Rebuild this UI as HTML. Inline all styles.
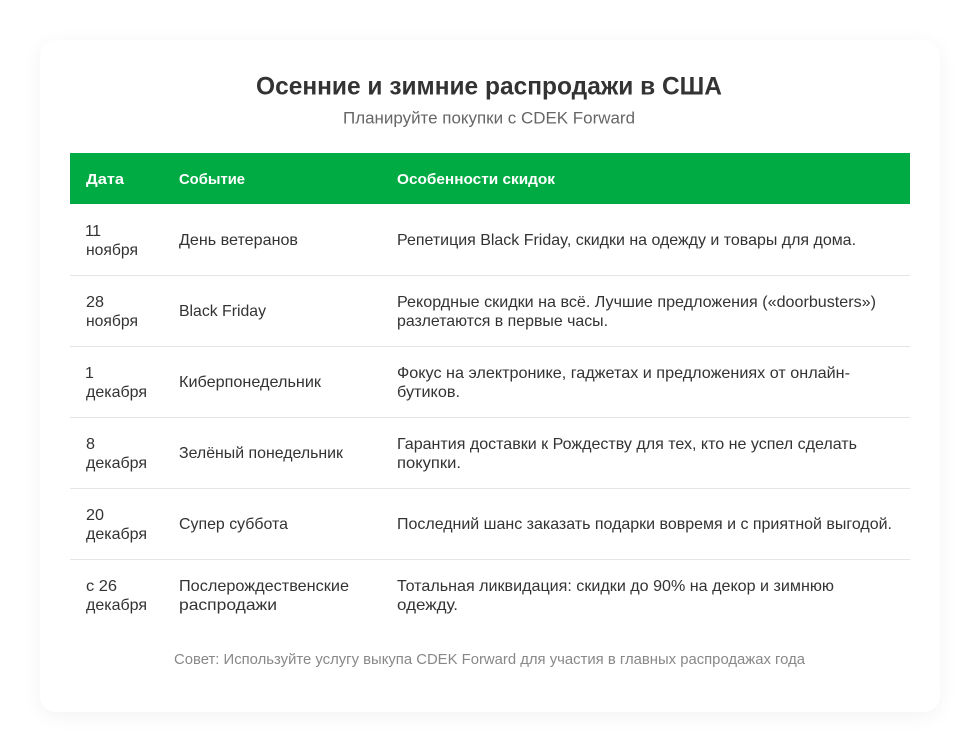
<!DOCTYPE html>
<html lang="ru">
<head>
<meta charset="utf-8">
<title>Осенние и зимние распродажи в США</title>
<style>
html,body{margin:0;padding:0;background:#fff;width:978px;height:752px;overflow:hidden}
.card{position:absolute;left:40px;top:40px;width:900px;height:672px;background:#fff;border-radius:16px;box-shadow:0 4px 20px rgba(0,0,0,.05)}
svg{position:absolute;left:0;top:0}
text{font-family:"Liberation Sans",sans-serif;font-size:16px;fill:#333}
.h{font-size:15px;font-weight:700;fill:#fff}
</style>
</head>
<body>
<div class="card"></div>
<svg width="978" height="752" viewBox="0 0 978 752" xmlns="http://www.w3.org/2000/svg">
<text x="256" y="94.500" style="font-size:25px;font-weight:700" textLength="466" lengthAdjust="spacingAndGlyphs">Осенние и зимние распродажи в США</text>
<text x="343" y="123.500" style="font-size:17px;fill:#666" textLength="292" lengthAdjust="spacingAndGlyphs">Планируйте покупки с CDEK Forward</text>
<rect x="70" y="153" width="840" height="51" fill="#00AB44"/>
<text class="h" x="86" y="184" textLength="38" lengthAdjust="spacingAndGlyphs">Дата</text>
<text class="h" x="179" y="184" textLength="66" lengthAdjust="spacingAndGlyphs">Событие</text>
<text class="h" x="397" y="184" textLength="158" lengthAdjust="spacingAndGlyphs">Особенности скидок</text>
<g fill="#e5e5e5">
<rect x="70" y="275" width="840" height="1"/>
<rect x="70" y="346" width="840" height="1"/>
<rect x="70" y="417" width="840" height="1"/>
<rect x="70" y="488" width="840" height="1"/>
<rect x="70" y="559" width="840" height="1"/>
</g>
<text x="85" y="236" textLength="15" lengthAdjust="spacing" style="letter-spacing:-1px">11</text>
<text x="86" y="255" textLength="52" lengthAdjust="spacingAndGlyphs">ноября</text>
<text x="179" y="245" textLength="119" lengthAdjust="spacingAndGlyphs">День ветеранов</text>
<text x="397" y="245" textLength="459" lengthAdjust="spacingAndGlyphs">Репетиция Black Friday, скидки на одежду и товары для дома.</text>
<text x="86" y="307" textLength="18" lengthAdjust="spacingAndGlyphs">28</text>
<text x="86" y="326" textLength="52" lengthAdjust="spacingAndGlyphs">ноября</text>
<text x="179" y="316" textLength="87" lengthAdjust="spacingAndGlyphs">Black Friday</text>
<text x="397" y="307" textLength="479" lengthAdjust="spacingAndGlyphs">Рекордные скидки на всё. Лучшие предложения («doorbusters»)</text>
<text x="397" y="326" textLength="211" lengthAdjust="spacingAndGlyphs">разлетаются в первые часы.</text>
<text x="85" y="378">1</text>
<text x="86" y="397" textLength="61" lengthAdjust="spacingAndGlyphs">декабря</text>
<text x="179" y="387" textLength="142" lengthAdjust="spacingAndGlyphs">Киберпонедельник</text>
<text x="397" y="378" textLength="453" lengthAdjust="spacingAndGlyphs">Фокус на электронике, гаджетах и предложениях от онлайн-</text>
<text x="397" y="397" textLength="63" lengthAdjust="spacingAndGlyphs">бутиков.</text>
<text x="86" y="449" textLength="9" lengthAdjust="spacingAndGlyphs">8</text>
<text x="86" y="468" textLength="61" lengthAdjust="spacingAndGlyphs">декабря</text>
<text x="179" y="458" textLength="164" lengthAdjust="spacingAndGlyphs">Зелёный понедельник</text>
<text x="397" y="449" textLength="460" lengthAdjust="spacingAndGlyphs">Гарантия доставки к Рождеству для тех, кто не успел сделать</text>
<text x="397" y="468" textLength="64" lengthAdjust="spacingAndGlyphs">покупки.</text>
<text x="86" y="520" textLength="18" lengthAdjust="spacingAndGlyphs">20</text>
<text x="86" y="539" textLength="61" lengthAdjust="spacingAndGlyphs">декабря</text>
<text x="179" y="529" textLength="109" lengthAdjust="spacingAndGlyphs">Супер суббота</text>
<text x="397" y="529" textLength="495" lengthAdjust="spacingAndGlyphs">Последний шанс заказать подарки вовремя и с приятной выгодой.</text>
<text x="86" y="591" textLength="31" lengthAdjust="spacingAndGlyphs">с 26</text>
<text x="86" y="610" textLength="61" lengthAdjust="spacingAndGlyphs">декабря</text>
<text x="179" y="591" textLength="170" lengthAdjust="spacingAndGlyphs">Послерождественские</text>
<text x="179" y="610" textLength="98" lengthAdjust="spacingAndGlyphs">распродажи</text>
<text x="397" y="591" textLength="437" lengthAdjust="spacingAndGlyphs">Тотальная ликвидация: скидки до 90% на декор и зимнюю</text>
<text x="397" y="610" textLength="61" lengthAdjust="spacingAndGlyphs">одежду.</text>
<text x="174" y="664" style="font-size:15px;fill:#888" textLength="631" lengthAdjust="spacingAndGlyphs">Совет: Используйте услугу выкупа CDEK Forward для участия в главных распродажах года</text>
</svg>
</body>
</html>
